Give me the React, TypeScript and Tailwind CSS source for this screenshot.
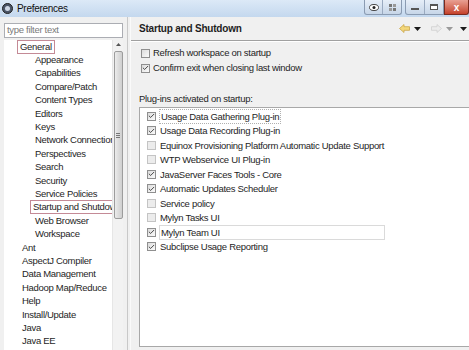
import { Check } from "lucide-react";

const TREE = [
  { label: "General", depth: 0, boxed: true },
  { label: "Appearance", depth: 1 },
  { label: "Capabilities", depth: 1 },
  { label: "Compare/Patch", depth: 1 },
  { label: "Content Types", depth: 1 },
  { label: "Editors", depth: 1 },
  { label: "Keys", depth: 1 },
  { label: "Network Connections", depth: 1 },
  { label: "Perspectives", depth: 1 },
  { label: "Search", depth: 1 },
  { label: "Security", depth: 1 },
  { label: "Service Policies", depth: 1 },
  { label: "Startup and Shutdown", depth: 1, boxed: true },
  { label: "Web Browser", depth: 1 },
  { label: "Workspace", depth: 1 },
  { label: "Ant", depth: 0 },
  { label: "AspectJ Compiler", depth: 0 },
  { label: "Data Management", depth: 0 },
  { label: "Hadoop Map/Reduce", depth: 0 },
  { label: "Help", depth: 0 },
  { label: "Install/Update", depth: 0 },
  { label: "Java", depth: 0 },
  { label: "Java EE", depth: 0 },
  { label: "Java Persistence", depth: 0 },
];

const PLUGINS = [
  { label: "Usage Data Gathering Plug-in", on: true, focus: true },
  { label: "Usage Data Recording Plug-in", on: true },
  { label: "Equinox Provisioning Platform Automatic Update Support", on: false },
  { label: "WTP Webservice UI Plug-in", on: false },
  { label: "JavaServer Faces Tools - Core", on: true },
  { label: "Automatic Updates Scheduler", on: true },
  { label: "Service policy", on: false },
  { label: "Mylyn Tasks UI", on: false },
  { label: "Mylyn Team UI", on: true, selected: true },
  { label: "Subclipse Usage Reporting", on: true },
];

function Box({ on, faded }: { on: boolean; faded?: boolean }) {
  return (
    <span
      className={`w-[9px] h-[9px] border flex items-center justify-center shrink-0 ${faded ? "border-[#c4c4c4] bg-[#ececec]" : "border-[#8f8f8f] bg-gradient-to-br from-[#dcdcdc] to-[#fbfbfb]"}`}
    >
      {on && <Check size={8} strokeWidth={3} className="text-[#333]" />}
    </span>
  );
}

function Caret({ light }: { light?: boolean }) {
  return (
    <svg width="7" height="4" viewBox="0 0 7 4">
      <path d="M0 0h7L3.5 4z" fill={light ? "#9a9a9a" : "#1a1a1a"} />
    </svg>
  );
}

export default function App() {
  return (
    <div
      className="w-[469px] h-[350px] overflow-hidden bg-[#f0f0f0] flex flex-col text-[9.5px] text-[#1e1e1e] tracking-[-0.3px]"
      style={{ fontFamily: '"Liberation Sans", Arial, sans-serif' }}
    >
      {/* title bar */}
      <div className="h-[17px] shrink-0 flex items-center bg-gradient-to-b from-[#dce9f7] to-[#c4d8ee] relative">
        <span className="ml-[2px] w-[11px] h-[11px] rounded-full bg-[#4a5568] border border-[#222] flex items-center justify-center">
          <span className="w-[5px] h-[5px] rounded-full bg-[#cfd8e6]" />
        </span>
        <span className="ml-[4px] text-[10px] text-[#111]">Preferences</span>
        <div className="ml-auto flex items-start self-start h-[16px]">
          <div className="flex h-[15px] border border-t-0 border-[#8a9bb2] rounded-b-[3px] bg-gradient-to-b from-[#e6eef8] to-[#c7d6e8] overflow-hidden">
            <span className="w-[18px] flex items-center justify-center border-r border-[#9aaac0]">
              <svg width="10" height="7" viewBox="0 0 10 7">
                <ellipse cx="5" cy="3.5" rx="4.5" ry="3" fill="#fff" stroke="#444" />
                <circle cx="5" cy="3.5" r="1.5" fill="#222" />
              </svg>
            </span>
            <span className="w-[18px] flex items-center justify-center">
              <svg width="9" height="9" viewBox="0 0 9 9">
                <rect x="1" y="1" width="3" height="3" fill="#777" />
                <rect x="5" y="1" width="3" height="3" fill="#999" />
                <rect x="1" y="5" width="3" height="3" fill="#999" />
                <rect x="5" y="5" width="3" height="3" fill="#777" />
              </svg>
            </span>
          </div>
          <div className="ml-[3px] flex h-[15px] border border-t-0 border-[#8a9bb2] rounded-bl-[3px] bg-gradient-to-b from-[#e6eef8] to-[#c7d6e8] overflow-hidden">
            <span className="w-[19px] flex items-end justify-center pb-[4px] border-r border-[#9aaac0]">
              <span className="w-[8px] h-[2px] bg-[#fff] border border-[#555]" />
            </span>
            <span className="w-[18px] flex items-center justify-center">
              <span className="w-[8px] h-[6px] border border-[#555] border-t-2 bg-[#fff]" />
            </span>
          </div>
          <div className="w-[25px] h-[15px] flex items-center justify-center rounded-br-[3px] bg-gradient-to-b from-[#e8a093] to-[#c4402a] border border-t-0 border-[#7a2a1e] text-white text-[10px] font-bold tracking-normal">
            x
          </div>
        </div>
      </div>

      {/* body */}
      <div className="flex-1 flex min-h-0">
        {/* left: filter + tree */}
        <div className="w-[127px] shrink-0 flex flex-col pt-[6px]">
          <div className="ml-[4px] w-[119px] h-[15px] border border-[#abadb3] bg-white flex items-center px-[2px] text-[#7a7a7a]">
            type filter text
          </div>
          <div className="flex-1 flex min-h-0 mt-[2px] ml-[4px] w-[119px] bg-white">
            <div className="flex-1 overflow-hidden">
              {TREE.map((t) => (
                <div
                  key={t.label}
                  className={`h-[13.4px] flex items-center whitespace-nowrap ${t.depth ? "pl-[29px]" : "pl-[16px]"}`}
                >
                  <span className={`px-[2px] leading-[12px] ${t.boxed ? "border border-[#c48a96] -ml-[3px]" : ""}`}>{t.label}</span>
                </div>
              ))}
            </div>
            <div className="w-[11px] shrink-0 bg-[#f2f2f2] border-l border-[#e6e6e6] flex flex-col items-center pt-[3px]">
              <svg width="5" height="3" viewBox="0 0 5 3">
                <path d="M0 3L2.5 0L5 3z" fill="#555" />
              </svg>
              <div className="mt-[5px] w-[9px] h-[168px] rounded-[2px] border border-[#9c9c9c] bg-gradient-to-r from-[#ececec] via-[#dcdcdc] to-[#cfcfcf] flex items-center justify-center">
                <div className="flex flex-col gap-[1px]">
                  <span className="w-[4px] h-px bg-[#777]" />
                  <span className="w-[4px] h-px bg-[#777]" />
                  <span className="w-[4px] h-px bg-[#777]" />
                </div>
              </div>
            </div>
          </div>
        </div>

        {/* sash */}
        <div className="w-[4px] shrink-0 border-l border-[#c8c8c8] border-r border-r-[#fafafa]" />

        {/* right: page */}
        <div className="flex-1 flex flex-col min-w-0">
          <div className="h-[24px] shrink-0 flex items-center pl-[8px] border-b border-[#a0a0a0] shadow-[0_1px_0_#ffffff]">
            <span className="font-bold text-[10px] tracking-[-0.2px]">Startup and Shutdown</span>
            <div className="ml-auto flex items-center gap-[4px] pr-[2px]">
              <svg width="11" height="9" viewBox="0 0 11 9">
                <path d="M0.5 4.5L5 0.5v2.2h5.5v3.6H5v2.2z" fill="#f3d77a" stroke="#c9a64a" strokeWidth="0.8" />
              </svg>
              <Caret />
              <svg width="11" height="9" viewBox="0 0 11 9" className="ml-[6px]">
                <path d="M10.5 4.5L6 0.5v2.2H0.5v3.6H6v2.2z" fill="#ececec" stroke="#cfcfcf" strokeWidth="0.8" />
              </svg>
              <Caret light />
              <span className="ml-[3px]">
                <Caret />
              </span>
            </div>
          </div>

          <div className="pl-[10px] pt-[5px] flex flex-col gap-[1px]">
            <div className="h-[14px] flex items-center gap-[3px]">
              <Box on={false} />
              <span>Refresh workspace on startup</span>
            </div>
            <div className="h-[14px] flex items-center gap-[3px]">
              <Box on />
              <span>Confirm exit when closing last window</span>
            </div>
          </div>

          <div className="pl-[8px] mt-[18px] h-[12px] flex items-center">Plug-ins activated on startup:</div>

          <div className="ml-[8px] mt-[2px] flex-1 mb-[3px] bg-white border border-[#a8a8a8] border-r-0 pt-[1px]">
            {PLUGINS.map((p) => (
              <div key={p.label} className="h-[14.5px] flex items-center pl-[7px] whitespace-nowrap">
                <Box on={p.on} faded={!p.on} />
                <span
                  className={`ml-[3px] leading-[13px] px-[1px] ${p.focus ? "border border-dotted border-[#b0b0b0]" : ""} ${p.selected ? "border border-[#dadada] w-[226px]" : ""}`}
                >
                  {p.label}
                </span>
              </div>
            ))}
          </div>
        </div>
      </div>
    </div>
  );
}
